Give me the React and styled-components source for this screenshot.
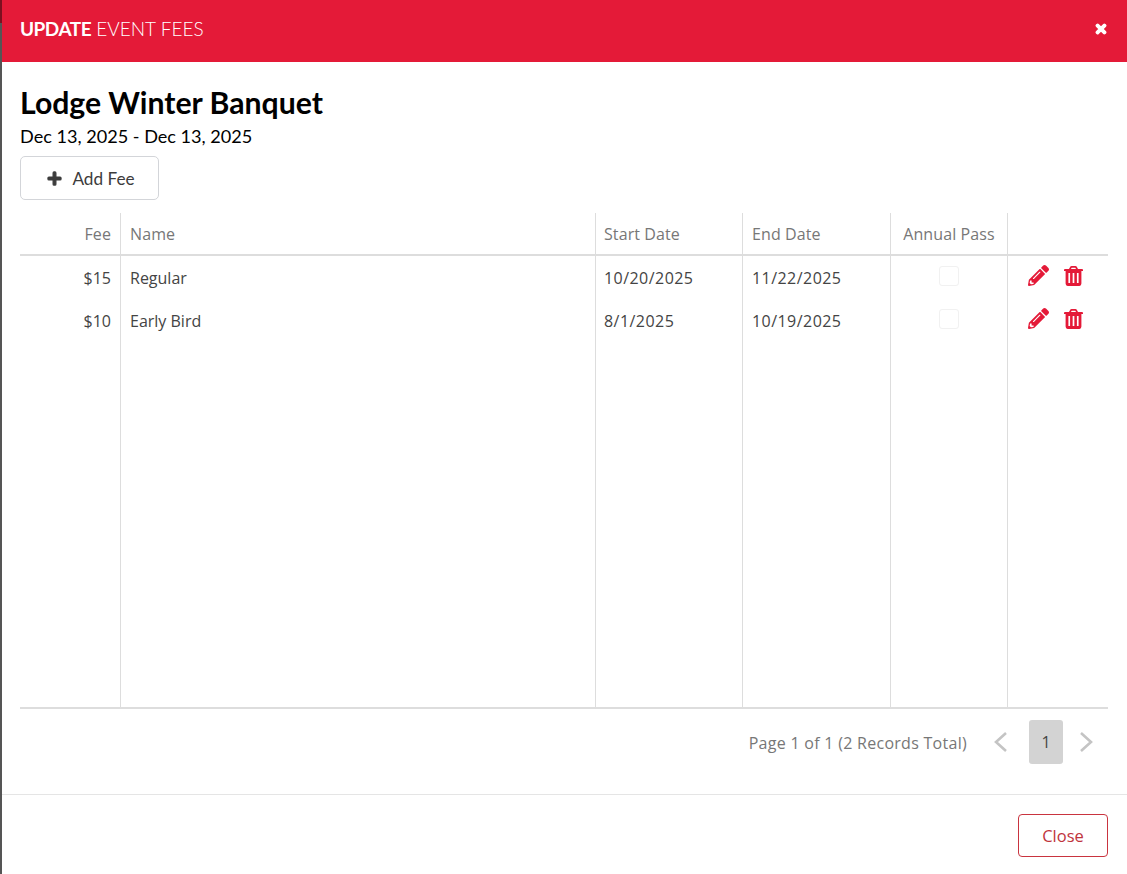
import React from "react";
import styled, { createGlobalStyle } from "styled-components";
import { FaPencilAlt, FaPlus, FaTimes } from "react-icons/fa";

const GlobalStyle = createGlobalStyle`
  html, body {
    margin: 0;
    padding: 0;
    background: #fff;
  }
  * {
    box-sizing: border-box;
  }
`;

const COLUMNS = "101px 475px 147px 148px 117px 1fr";

const fees = [
  { id: 1, fee: "$15", name: "Regular", start: "10/20/2025", end: "11/22/2025" },
  { id: 2, fee: "$10", name: "Early Bird", start: "8/1/2025", end: "10/19/2025" },
];

const TrashIcon = () => (
  <TrashSvg viewBox="0 0 19 20">
    <path
      fillRule="evenodd"
      d="M5 3 L6.2 .8 Q6.6 0 7.6 0 H11.4 Q12.4 0 12.8 .8 L14 3 H18 Q19 3 19 4 V5 H17.4 V17.6 Q17.4 20 15.4 20 H3.6 Q1.6 20 1.6 17.6 V5 H0 V4 Q0 3 1 3 Z M7 3 H12 L11.3 1.7 H7.7 Z M4.4 7 V17 H6.1 V7 Z M8.65 7 V17 H10.35 V7 Z M12.9 7 V17 H14.6 V7 Z"
    />
  </TrashSvg>
);

const Chevron = ({ right }) => (
  <ChevronSvg viewBox="0 0 14 22">
    <polyline points={right ? "2,2 12,11 2,20" : "12,2 2,11 12,20"} />
  </ChevronSvg>
);

const App = () => {
  return (
    <Page>
      <GlobalStyle />
      <Backdrop />
      <Dialog>
        <Header>
          <HeaderTitle>
            <strong>UPDATE</strong> EVENT FEES
          </HeaderTitle>
          <CloseIcon>
            <FaTimes />
          </CloseIcon>
        </Header>

        <Body>
          <EventName>Lodge Winter Banquet</EventName>
          <EventDates>Dec 13, 2025 - Dec 13, 2025</EventDates>
          <AddButton>
            <FaPlus />
            Add Fee
          </AddButton>

          <Grid>
            <HeadRow>
              <HeadCell $align="flex-end">Fee</HeadCell>
              <HeadCell>Name</HeadCell>
              <HeadCell $pad="8px">Start Date</HeadCell>
              <HeadCell>End Date</HeadCell>
              <HeadCell $align="center">Annual Pass</HeadCell>
              <HeadCell />
            </HeadRow>
            <Rows>
              {fees.map((f) => (
                <Row key={f.id}>
                  <Cell $align="flex-end">{f.fee}</Cell>
                  <Cell>{f.name}</Cell>
                  <Cell $pad="8px" $digits>
                    {f.start}
                  </Cell>
                  <Cell $digits>{f.end}</Cell>
                  <Cell $align="center">
                    <FakeCheck />
                  </Cell>
                  <ActionCell>
                    <FaPencilAlt />
                    <TrashIcon />
                  </ActionCell>
                </Row>
              ))}
              <Filler>
                <FillerCell />
                <FillerCell />
                <FillerCell />
                <FillerCell />
                <FillerCell />
                <FillerCell />
              </Filler>
            </Rows>
          </Grid>

          <Pager>
            <PagerText>Page 1 of 1 (2 Records Total)</PagerText>
            <PagerArrow>
              <Chevron />
            </PagerArrow>
            <PageNumber>1</PageNumber>
            <PagerArrow>
              <Chevron right />
            </PagerArrow>
          </Pager>
        </Body>

        <Footer>
          <CloseButton>Close</CloseButton>
        </Footer>
      </Dialog>
    </Page>
  );
};

const Page = styled.div`
  display: flex;
  width: 1127px;
  height: 874px;
  overflow: hidden;
`;

const Backdrop = styled.div`
  width: 2px;
  flex: none;
  background: linear-gradient(#7c1020 0 23px, #555 23px);
`;

const Dialog = styled.div`
  flex: 1;
  display: flex;
  flex-direction: column;
  background: #fff;
`;

const Header = styled.div`
  height: 62px;
  flex: none;
  display: flex;
  align-items: center;
  justify-content: space-between;
  padding: 0 19px 6px 18px;
  background: #e41a38;
  color: #fff;
`;

const HeaderTitle = styled.div`
  font-family: Lato, sans-serif;
  font-size: 19px;
  font-weight: 300;

  strong {
    font-weight: 700;
    letter-spacing: -0.5px;
  }
`;

const CloseIcon = styled.span`
  display: flex;
  font-size: 14px;
  margin-top: 2px;

  svg {
    stroke: currentColor;
    stroke-width: 50;
  }
`;

const Body = styled.div`
  flex: 1;
  display: flex;
  flex-direction: column;
  align-items: flex-start;
  padding: 22px 19px 0 18px;
`;

const EventName = styled.h2`
  margin: 0;
  height: 36px;
  font-family: Lato, sans-serif;
  font-size: 30.2px;
  font-weight: 700;
  line-height: 36px;
  color: #000;
`;

const EventDates = styled.div`
  height: 36px;
  padding-top: 3px;
  font-family: Lato, sans-serif;
  font-size: 18.1px;
  line-height: 26px;
  color: #000;
`;

const AddButton = styled.button`
  width: 139px;
  height: 44px;
  display: flex;
  align-items: center;
  justify-content: center;
  gap: 10px;
  padding: 0 0 0 3px;
  background: #fff;
  border: 1px solid #d3d5d9;
  border-radius: 5px;
  font-family: Lato, sans-serif;
  font-size: 17.2px;
  color: #3c3c3c;

  svg {
    font-size: 15px;
    stroke: currentColor;
    stroke-width: 40;
  }
`;

const Grid = styled.div`
  width: 1088px;
  margin-top: 13px;
  display: flex;
  flex-direction: column;
  height: 496px;
  border-bottom: 2px solid #ddd;
`;

const HeadRow = styled.div`
  display: grid;
  grid-template-columns: ${COLUMNS};
  height: 43px;
  flex: none;
  border-bottom: 2px solid #ddd;
`;

const cellText = `
  font-family: "Open Sans", sans-serif;
  font-size: 16px;
  padding: 0 9px;
  white-space: nowrap;
  display: flex;
  align-items: center;
`;

const HeadCell = styled.div`
  ${cellText}
  padding-left: ${(p) => p.$pad || "9px"};
  color: #777;
  letter-spacing: 0.1px;
  justify-content: ${(p) => p.$align || "flex-start"};
  border-right: 1px solid #ddd;

  &:last-child {
    border-right: 0;
  }
`;

const Rows = styled.div`
  flex: 1;
  display: flex;
  flex-direction: column;
`;

const Row = styled.div`
  display: grid;
  grid-template-columns: ${COLUMNS};
  height: 43px;
  flex: none;
`;

const Cell = styled.div`
  ${cellText}
  padding-left: ${(p) => p.$pad || "9px"};
  color: #444;
  letter-spacing: ${(p) => (p.$digits ? "0.45px" : "0")};
  justify-content: ${(p) => p.$align || "flex-start"};
  border-right: 1px solid #ddd;
`;

const ActionCell = styled.div`
  display: flex;
  align-items: center;
  gap: 15px;
  padding: 0 0 4px 20px;
  color: #e41a38;
  font-size: 21px;
`;

const TrashSvg = styled.svg`
  width: 19px;
  height: 20px;
  fill: currentColor;
`;

const FakeCheck = styled.span`
  width: 20px;
  height: 20px;
  margin-bottom: 4px;
  border: 1px solid #f1f1f1;
  border-radius: 3px;
  background: #fff;
`;

const Filler = styled.div`
  flex: 1;
  display: grid;
  grid-template-columns: ${COLUMNS};
`;

const FillerCell = styled.div`
  border-right: 1px solid #ddd;

  &:last-child {
    border-right: 0;
  }
`;

const Pager = styled.div`
  width: 1088px;
  margin-top: 11px;
  height: 44px;
  display: flex;
  align-items: center;
  justify-content: flex-end;
  padding-right: 7px;
`;

const PagerText = styled.span`
  font-family: "Open Sans", sans-serif;
  font-size: 16px;
  letter-spacing: 0.28px;
  color: #777;
  margin: 2px 19px 0 0;
`;

const PagerArrow = styled.span`
  width: 30px;
  display: flex;
  justify-content: center;
`;

const ChevronSvg = styled.svg`
  width: 14px;
  height: 22px;
  fill: none;
  stroke: #c4c4c4;
  stroke-width: 2.6;
`;

const PageNumber = styled.span`
  width: 34px;
  height: 44px;
  margin: 0 8px 0 13px;
  display: flex;
  align-items: center;
  justify-content: center;
  background: #d3d3d3;
  border-radius: 3px;
  font-family: "Open Sans", sans-serif;
  font-size: 16px;
  color: #444;
`;

const Footer = styled.div`
  height: 80px;
  flex: none;
  display: flex;
  justify-content: flex-end;
  padding: 19px 19px 0 0;
  border-top: 1px solid #e5e5e5;
`;

const CloseButton = styled.button`
  width: 90px;
  height: 43px;
  padding: 0;
  background: #fff;
  border: 1px solid #c9343f;
  border-radius: 4px;
  font-family: "Open Sans", sans-serif;
  font-size: 16.5px;
  color: #c0343c;
`;

export default App;
